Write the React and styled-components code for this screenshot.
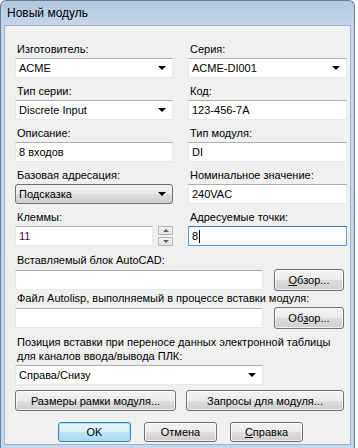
import React from 'react';
import styled, { createGlobalStyle, css } from 'styled-components';

const GlobalStyle = createGlobalStyle`
    html, body {
        margin: 0;
        padding: 0;
        background: #ffffff;
    }
    body {
        font-family: "Liberation Sans", Arial, sans-serif;
        font-size: 11px;
        color: #000;
    }
`;

const Window = styled.div`
    width: 355px;
    height: 448px;
    box-sizing: border-box;
    display: flex;
    flex-direction: column;
    border: 1px solid #6b7d93;
    border-bottom: none;
    border-radius: 6px 6px 0 0;
    background: linear-gradient(to bottom, #b3c8e0 0px, #c3d5ea 24px, #c6d7eb 100%);
    overflow: hidden;
`;

const TitleBar = styled.div`
    height: 24px;
    flex: none;
    display: flex;
    align-items: center;
    padding-left: 6px;
    font-size: 12px;
    color: #000;
`;

const Client = styled.div`
    flex: 1;
    margin: 0 3px 3px 3px;
    background: #f0f0f0;
    border: 1px solid #9fb1c7;
    padding: 16px 8px 0 10px;
    display: flex;
    flex-direction: column;
`;

const Grid = styled.div`
    display: grid;
    grid-template-columns: 158px 159px;
    column-gap: 15px;
    row-gap: 6px;
`;

const Field = styled.div`
    display: flex;
    flex-direction: column;
    gap: 2px;
`;

const Label = styled.div`
    line-height: 14px;
    padding-left: 2px;
    white-space: nowrap;
`;

const inputBox = css`
    height: 20px;
    box-sizing: border-box;
    background: #fff;
    border: 1px solid #e3e9ef;
    border-top-color: #abadb3;
    display: flex;
    align-items: center;
    padding: 0 3px;
    white-space: nowrap;
`;

const TextBox = styled.div`
    ${inputBox};
    flex: ${p => (p.$grow ? 1 : 'none')};
    width: ${p => (p.$width ? `${p.$width}px` : 'auto')};
    color: ${p => p.$color || '#000'};
    ${p => p.$focus && css`
        border-color: #569de5;
        border-top-color: #3d7bad;
    `}
`;

const Caret = styled.span`
    display: inline-block;
    width: 1px;
    height: 13px;
    background: #000;
    margin-left: 1px;
`;

const Combo = styled.div`
    ${inputBox};
    width: ${p => (p.$width ? `${p.$width}px` : 'auto')};
    justify-content: space-between;
    ${p => p.$button && css`
        border: 1px solid #707070;
        border-radius: 3px;
        background: linear-gradient(to bottom, #f2f2f2 0%, #ebebeb 50%, #dddddd 51%, #cfcfcf 100%);
    `}
`;

const Arrow = styled.span`
    width: 0;
    height: 0;
    border-left: 4px solid transparent;
    border-right: 4px solid transparent;
    border-top: 4px solid #000;
    margin-right: 3px;
`;

const SpinRow = styled.div`
    display: flex;
    gap: 5px;
`;

const Spinner = styled.div`
    display: flex;
    flex-direction: column;
    justify-content: space-between;
    width: 15px;
    height: 20px;
`;

const SpinButton = styled.div`
    height: 9px;
    box-sizing: border-box;
    border: 1px solid #b5b5b5;
    background: linear-gradient(to bottom, #f4f4f4, #e2e2e2);
    display: flex;
    align-items: center;
    justify-content: center;
    &::after {
        content: '';
        border-left: 3px solid transparent;
        border-right: 3px solid transparent;
        ${p => (p.$up
            ? 'border-bottom: 3px solid #4d6185;'
            : 'border-top: 3px solid #4d6185;')}
    }
`;

const Section = styled.div`
    display: flex;
    flex-direction: column;
    gap: 2px;
    margin-top: ${p => p.$top ?? 6}px;
`;

const BrowseRow = styled.div`
    display: flex;
    align-items: center;
    gap: 11px;
`;

const Button = styled.div`
    height: ${p => p.$h || 22}px;
    width: ${p => (p.$width ? `${p.$width}px` : 'auto')};
    flex: ${p => (p.$grow ? 1 : 'none')};
    box-sizing: border-box;
    border: 1px solid #707070;
    border-radius: 3px;
    background: linear-gradient(to bottom, #f2f2f2 0%, #ebebeb 50%, #dddddd 51%, #cfcfcf 100%);
    display: flex;
    align-items: center;
    justify-content: center;
    white-space: nowrap;
    box-shadow: inset 0 0 0 1px rgba(255, 255, 255, 0.7);
    ${p => p.$default && css`
        border-color: #3c7fb1;
        background: linear-gradient(to bottom, #eaf6fd 0%, #d9f0fc 50%, #bee6fd 51%, #a7d9f5 100%);
        box-shadow: inset 0 0 0 1px #9fe0fb;
    `}
`;

const U = styled.span`
    text-decoration: underline;
`;

const ButtonRow = styled.div`
    display: flex;
    gap: ${p => p.$gap || 10}px;
    margin-top: ${p => p.$top || 5}px;
    padding-left: ${p => p.$left || 0}px;
`;

export default function App() {
    return (
        <>
            <GlobalStyle />
            <Window>
                <TitleBar>Новый модуль</TitleBar>
                <Client>
                    <Grid>
                        <Field>
                            <Label>Изготовитель:</Label>
                            <Combo>ACME<Arrow /></Combo>
                        </Field>
                        <Field>
                            <Label>Серия:</Label>
                            <Combo>ACME-DI001<Arrow /></Combo>
                        </Field>
                        <Field>
                            <Label>Тип серии:</Label>
                            <Combo>Discrete Input<Arrow /></Combo>
                        </Field>
                        <Field>
                            <Label>Код:</Label>
                            <TextBox>123-456-7A</TextBox>
                        </Field>
                        <Field>
                            <Label>Описание:</Label>
                            <TextBox>8 входов</TextBox>
                        </Field>
                        <Field>
                            <Label>Тип модуля:</Label>
                            <TextBox>DI</TextBox>
                        </Field>
                        <Field>
                            <Label>Базовая адресация:</Label>
                            <Combo $button>Подсказка<Arrow /></Combo>
                        </Field>
                        <Field>
                            <Label>Номинальное значение:</Label>
                            <TextBox>240VAC</TextBox>
                        </Field>
                        <Field>
                            <Label>Клеммы:</Label>
                            <SpinRow>
                                <TextBox $grow $color="#3c0a49">11</TextBox>
                                <Spinner>
                                    <SpinButton $up />
                                    <SpinButton />
                                </Spinner>
                            </SpinRow>
                        </Field>
                        <Field>
                            <Label>Адресуемые точки:</Label>
                            <TextBox $focus>8<Caret /></TextBox>
                        </Field>
                    </Grid>

                    <Section $top={7}>
                        <Label>Вставляемый блок AutoCAD:</Label>
                        <BrowseRow>
                            <TextBox $width={248} />
                            <Button $width={70}><U>О</U>бзор...</Button>
                        </BrowseRow>
                    </Section>

                    <Section $top={0}>
                        <Label>Файл Autolisp, выполняемый в процессе вставки модуля:</Label>
                        <BrowseRow>
                            <TextBox $width={248} />
                            <Button $width={70}>Об<U>з</U>ор...</Button>
                        </BrowseRow>
                    </Section>

                    <Section $top={6}>
                        <Label>
                            Позиция вставки при переносе данных электронной таблицы
                            <br />
                            для каналов ввода/вывода ПЛК:
                        </Label>
                        <Combo $width={248}>Справа/Снизу<Arrow /></Combo>
                    </Section>

                    <ButtonRow $gap={10} $top={5}>
                        <Button $width={161} $h={21}>Размеры рамки модуля...</Button>
                        <Button $width={158} $h={21}>Запросы для модуля...</Button>
                    </ButtonRow>

                    <ButtonRow $gap={13} $top={11} $left={43}>
                        <Button $width={73} $h={20} $default>OK</Button>
                        <Button $width={73} $h={20}>Отмена</Button>
                        <Button $width={73} $h={20}><U>С</U>правка</Button>
                    </ButtonRow>
                </Client>
            </Window>
        </>
    );
}
